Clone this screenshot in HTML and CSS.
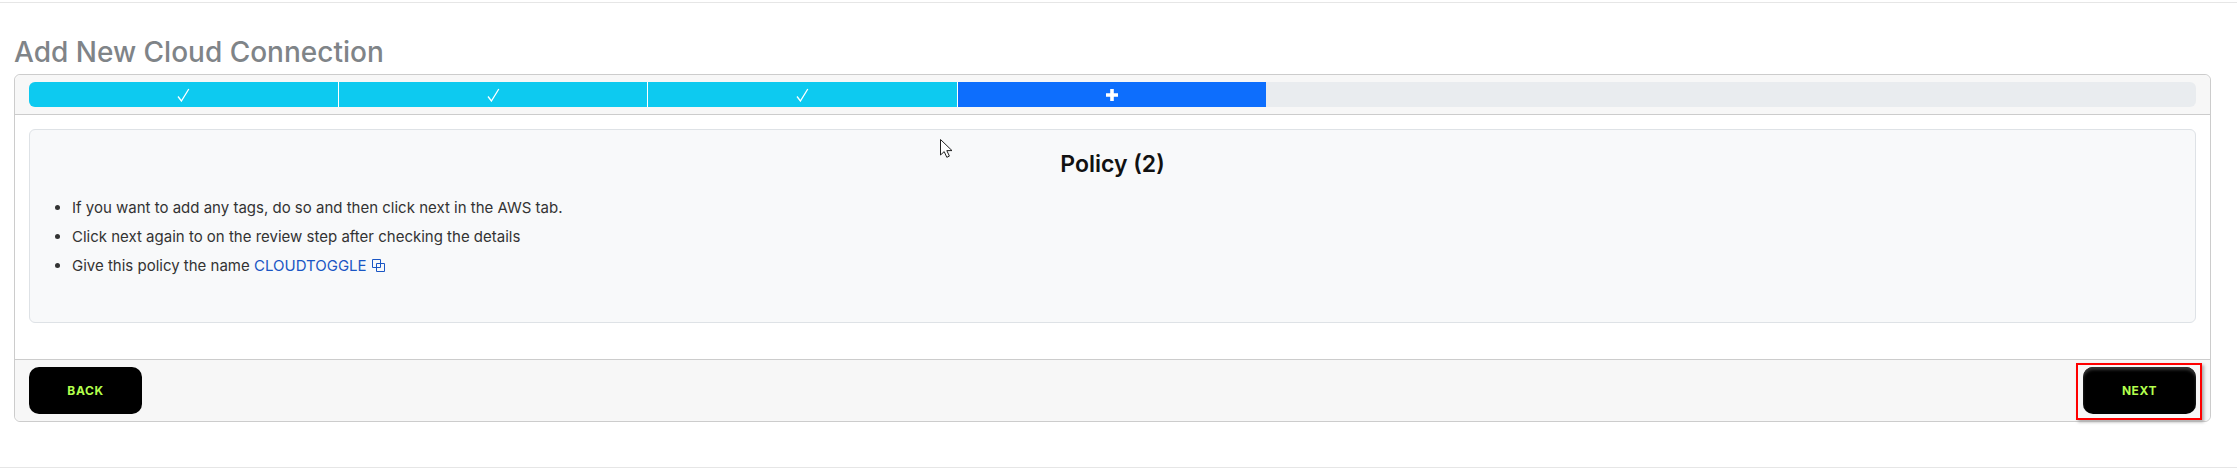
FILE: index.html
```html
<!DOCTYPE html>
<html lang="en">
<head>
    <meta charset="UTF-8">
    <title>Add New Cloud Connection</title>
    <link rel="stylesheet" href="styles.css">
</head>
<body>
    <div class="page">
        <h1 class="page-title">Add New Cloud Connection</h1>
        <div class="card">
            <div class="card-header">
                <div class="progress">
                    <div class="step done"><svg viewBox="0 0 13 14" width="13" height="14"><path d="M1 8.5l3.4 4.5L11.8 1" fill="none" stroke="#fff" stroke-width="1.3"/></svg></div>
                    <div class="step done"><svg viewBox="0 0 13 14" width="13" height="14"><path d="M1 8.5l3.4 4.5L11.8 1" fill="none" stroke="#fff" stroke-width="1.3"/></svg></div>
                    <div class="step done"><svg viewBox="0 0 13 14" width="13" height="14"><path d="M1 8.5l3.4 4.5L11.8 1" fill="none" stroke="#fff" stroke-width="1.3"/></svg></div>
                    <div class="step active"><svg viewBox="0 0 12 12" width="12" height="12"><path d="M6 0v12M0 6h12" fill="none" stroke="#fff" stroke-width="3.6"/></svg></div>
                </div>
            </div>
            <div class="card-body">
                <div class="panel">
                    <h2 class="panel-title">Policy (2)</h2>
                    <ul class="panel-list">
                        <li>If you want to add any tags, do so and then click next in the AWS tab.</li>
                        <li>Click next again to on the review step after checking the details</li>
                        <li>Give this policy the name <a class="copy-link" href="#">CLOUDTOGGLE
                            <svg class="copy-icon" viewBox="0 0 13 13" width="13" height="13" fill="none" stroke="currentColor" stroke-width="1"><path d="M.5.5h8v8h-8z"/><path d="M4.5 4.5h8v8h-8z"/></svg>
                        </a></li>
                    </ul>
                </div>
                <svg class="cursor" viewBox="0 0 13 19" width="13" height="19"><path d="M.5.5v15.5l3.7-3.4 2.6 5.7 2.6-1.2-2.6-5.5h5.2z" fill="#fff" stroke="#222" stroke-width="1"/></svg>
            </div>
            <div class="card-footer">
                <button class="btn" type="button">BACK</button>
                <div class="highlight">
                    <button class="btn btn-next" type="button">NEXT</button>
                </div>
            </div>
        </div>
    </div>
</body>
</html>
```

FILE: styles.css
```css
html, body {
    margin: 0;
    padding: 0;
    background: #fff;
}
body {
    font-family: Inter, Arial, sans-serif;
    color: #212529;
}
.page {
    box-sizing: border-box;
    height: 466px;
    margin-top: 2px;
    padding: 32px 26px 0 14px;
    border-top: 1px solid #e6e6e6;
    border-bottom: 1px solid #e6e6e6;
}
.page-title {
    margin: 0 0 7px;
    padding-top: 2px;
    font-size: 28px;
    line-height: 30px;
    font-weight: 500;
    color: #7f8488;
}
.card {
    border: 1px solid #ccc;
    border-radius: 6px;
    background: #fff;
}
.card-header {
    padding: 7px 14px;
    background: #f7f7f7;
    border-bottom: 1px solid #ccc;
    border-radius: 6px 6px 0 0;
}
.progress {
    display: flex;
    height: 25px;
    background: #e9ecef;
    border-radius: 6px;
    overflow: hidden;
}
.step {
    box-sizing: border-box;
    display: flex;
    align-items: center;
    justify-content: center;
    width: 14.27%;
}
.step + .step {
    border-left: 1px solid #fff;
}
.step.done {
    background: #0dcaf0;
}
.step.active {
    background: #0d6efd;
}
.card-body {
    position: relative;
    padding: 14px 14px 36px;
}
.panel {
    box-sizing: border-box;
    height: 194px;
    padding: 22px 0 0;
    background: #f8f9fa;
    border: 1px solid #dee2e6;
    border-radius: 6px;
}
.panel-title {
    margin: 0 0 20px;
    font-size: 23px;
    line-height: 25px;
    font-weight: 600;
    text-align: center;
    color: #111;
}
.panel-list {
    margin: 0;
    padding: 0 0 0 42px;
    font-size: 15px;
    line-height: 21px;
    color: #333;
}
.panel-list li {
    margin-bottom: 8px;
}
.copy-link {
    color: #1a56c4;
    text-decoration: none;
}
.copy-icon {
    margin-left: 1px;
    vertical-align: -1px;
}
.cursor {
    position: absolute;
    left: 925px;
    top: 24px;
}
.card-footer {
    display: flex;
    justify-content: space-between;
    padding: 7px 14px;
    background: #f7f7f7;
    border-top: 1px solid #ccc;
    border-radius: 0 0 6px 6px;
}
.btn {
    display: block;
    width: 113px;
    height: 47px;
    padding: 0;
    border: 0;
    border-radius: 10px;
    background: #000;
    color: #b3ff4d;
    font-family: Inter, Arial, sans-serif;
    font-size: 12px;
    font-weight: 700;
    letter-spacing: 0.6px;
}
.btn-next {
    box-shadow: inset 0 3px 3px #333;
}
.highlight {
    position: relative;
}
.highlight::after {
    content: "";
    position: absolute;
    left: -7px;
    right: -6px;
    top: -4px;
    bottom: -6px;
    border: 2px solid #f00;
    box-shadow: 2px 2px 3px #aaa;
}
```
